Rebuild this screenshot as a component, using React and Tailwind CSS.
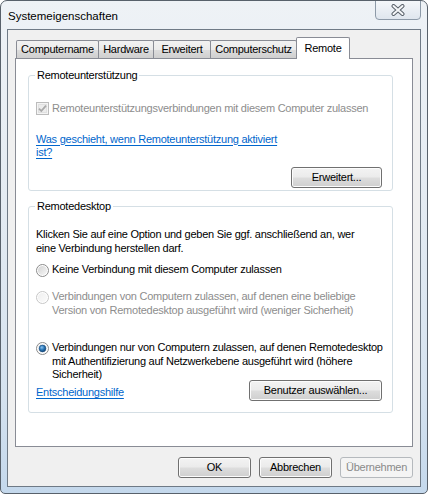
import React from "react";

const F = "font-['Liberation_Sans',Arial,sans-serif] tracking-[-0.25px]";

function Radio({ state }) {
  const id = "rg-" + state;
  return (
    <svg width="13" height="13" viewBox="0 0 13 13" className="shrink-0">
      <defs>
        <linearGradient id={id} x1="0" y1="0" x2="1" y2="1">
          <stop offset="0" stopColor={state === "disabled" ? "#efefef" : "#d2d2d2"} />
          <stop offset="1" stopColor={state === "disabled" ? "#fafafa" : "#f7f7f7"} />
        </linearGradient>
        <radialGradient id={id + "d"} cx="0.4" cy="0.35" r="0.7">
          <stop offset="0" stopColor="#8ec4ef" />
          <stop offset="0.5" stopColor="#2a77b8" />
          <stop offset="1" stopColor="#0f3f6e" />
        </radialGradient>
      </defs>
      <circle cx="6.5" cy="6.5" r="6" fill="#fff" stroke={state === "disabled" ? "#c6c6c6" : "#8a8a8a"} strokeWidth="1" />
      <circle cx="6.5" cy="6.5" r="4.6" fill={`url(#${id})`} />
      {state === "on" && (
        <>
          <circle cx="6.5" cy="6.5" r="4.3" fill="#fff" />
          <circle cx="6.5" cy="6.5" r="3.4" fill={`url(#${id}d)`} stroke="#1a4a7a" strokeWidth="0.6" />
        </>
      )}
    </svg>
  );
}

function Checkbox() {
  return (
    <svg width="13" height="13" viewBox="0 0 13 13" className="shrink-0">
      <rect x="0.5" y="0.5" width="12" height="12" fill="#f4f4f4" stroke="#bcbcbc" />
      <rect x="2.5" y="2.5" width="8" height="8" fill="#ececec" stroke="#e0e0e0" />
      <path d="M3 6.6 L5.3 9 L10 3.6" fill="none" stroke="#a9a9a9" strokeWidth="1.8" />
    </svg>
  );
}

function Btn({ children, w, disabled }) {
  return (
    <div
      className={
        "h-[21px] flex items-center justify-center rounded-[3px] border text-[11px] leading-none whitespace-nowrap " +
        w +
        (disabled
          ? " border-[#b5b9bd] bg-[#f4f4f4] text-[#8a8a8a]"
          : " border-[#707070] bg-[linear-gradient(#f3f3f3_0%,#ebebeb_48%,#dddddd_52%,#cfcfcf_100%)] text-black shadow-[inset_0_0_0_1px_#fcfcfc]")
      }
    >
      {children}
    </div>
  );
}

function Tab({ children, w, selected }) {
  if (selected) {
    return (
      <div
        className={
          "relative z-10 -ml-[1px] h-[22px] -mb-px flex items-start justify-center pt-[3px] border border-b-0 border-[#898c95] bg-white text-[11px] leading-[14px] rounded-t-[2px] whitespace-nowrap " +
          w
        }
      >
        {children}
      </div>
    );
  }
  return (
    <div
      className={
        "h-[18px] -ml-px flex items-center justify-center border border-b-0 border-[#898c95] bg-[linear-gradient(#f2f2f2_0%,#ebebeb_50%,#dddddd_51%,#cfcfcf_100%)] text-[11px] leading-none rounded-t-[2px] whitespace-nowrap " +
        w
      }
    >
      {children}
    </div>
  );
}

function Group({ label, h, children, className = "" }) {
  return (
    <div className={"relative ml-[12px] w-[365px] rounded-[3px] border border-[#d5dfe5] " + h + " " + className}>
      <span className="absolute left-[6px] -top-[8px] bg-white px-[2px] text-[11px] leading-[14px]">{label}</span>
      {children}
    </div>
  );
}

export default function App() {
  return (
    <div className={F + " w-[428px] h-[494px] bg-white"}>
      <div className="w-[428px] h-[494px] flex flex-col rounded-t-[7px] rounded-b-[5px] border border-[#58616b] bg-[linear-gradient(180deg,#eef2f6_0%,#e4ebf2_40%,#d5e2ef_80%,#c4d8ec_100%)] text-black overflow-hidden">
        <div className="h-[28px] flex items-start justify-between shrink-0">
          <div className="pl-[7px] pt-[8px] text-[11.5px] leading-[14px] text-black tracking-[0px]">Systemeigenschaften</div>
          <div className="mr-[6px] -mt-px w-[46px] h-[20px] rounded-b-[4px] border border-[#8d9aa8] bg-[linear-gradient(#f4f7fa,#dfe6ee)] flex items-center justify-center">
            <svg width="14" height="12" viewBox="0 0 14 12">
              <path d="M2.5 2 L11.5 10 M11.5 2 L2.5 10" stroke="#5a626b" strokeWidth="4" strokeLinecap="round" />
              <path d="M2.5 2 L11.5 10 M11.5 2 L2.5 10" stroke="#f4f6f8" strokeWidth="2" strokeLinecap="round" />
            </svg>
          </div>
        </div>
        <div className="mx-[6px] mb-[6px] flex-1 flex flex-col border border-[#6f7a86] bg-[#f0f0f0]">
          <div className="mt-[7px] ml-[9px] h-[21px] flex items-end relative z-10">
            <Tab w="w-[83px]">Computername</Tab>
            <Tab w="w-[56px]">Hardware</Tab>
            <Tab w="w-[58px]">Erweitert</Tab>
            <Tab w="w-[87px]">Computerschutz</Tab>
            <Tab w="w-[54px]" selected>Remote</Tab>
          </div>
          <div className="ml-[7px] w-[398px] h-[389px] border border-[#898c95] bg-white flex flex-col text-[11px] leading-[13.5px] whitespace-nowrap">
            <Group label="Remoteunterstützung" h="h-[116px]" className="mt-[16px]">
              <div className="flex flex-col pl-[7px]">
                <div className="mt-[26px] flex items-center gap-[3px] text-[#8d8d8d]">
                  <Checkbox />
                  <span>Remoteunterstützungsverbindungen mit diesem Computer zulassen</span>
                </div>
                <div className="mt-[17px] text-[#0066cc] underline underline-offset-[2px]">
                  Was geschieht, wenn Remoteunterstützung aktiviert
                  <br />
                  ist?
                </div>
                <div className="mt-[7px] self-end mr-[10px]">
                  <Btn w="w-[91px]">Erweitert...</Btn>
                </div>
              </div>
            </Group>
            <Group label="Remotedesktop" h="h-[207px]" className="mt-[15px]">
              <div className="flex flex-col pl-[7px]">
                <div className="mt-[21px]">
                  Klicken Sie auf eine Option und geben Sie ggf. anschließend an, wer
                  <br />
                  eine Verbindung herstellen darf.
                </div>
                <div className="mt-[8px] flex items-start gap-[3px]">
                  <div className="pt-[0.5px]"><Radio state="off" /></div>
                  <span>Keine Verbindung mit diesem Computer zulassen</span>
                </div>
                <div className="mt-[13.5px] flex items-start gap-[3px] text-[#8d8d8d]">
                  <div className="pt-[0.5px]"><Radio state="disabled" /></div>
                  <span>
                    Verbindungen von Computern zulassen, auf denen eine beliebige
                    <br />
                    Version von Remotedesktop ausgeführt wird (weniger Sicherheit)
                  </span>
                </div>
                <div className="mt-[24px] flex items-start gap-[3px]">
                  <div className="pt-[0.5px]"><Radio state="on" /></div>
                  <span>
                    Verbindungen nur von Computern zulassen, auf denen Remotedesktop
                    <br />
                    mit Authentifizierung auf Netzwerkebene ausgeführt wird (höhere
                    <br />
                    Sicherheit)
                  </span>
                </div>
                <div className="-mt-[2px] flex items-end justify-between mr-[10px]">
                  <span className="mb-[1px] text-[#0066cc] underline underline-offset-[2px]">Entscheidungshilfe</span>
                  <Btn w="w-[133px]">Benutzer auswählen...</Btn>
                </div>
              </div>
            </Group>
          </div>
          <div className="mt-[10px] mr-[7px] flex justify-end gap-[8px]">
            <Btn w="w-[73px]">OK</Btn>
            <Btn w="w-[73px]">Abbrechen</Btn>
            <Btn w="w-[73px]" disabled>Übernehmen</Btn>
          </div>
        </div>
      </div>
    </div>
  );
}
